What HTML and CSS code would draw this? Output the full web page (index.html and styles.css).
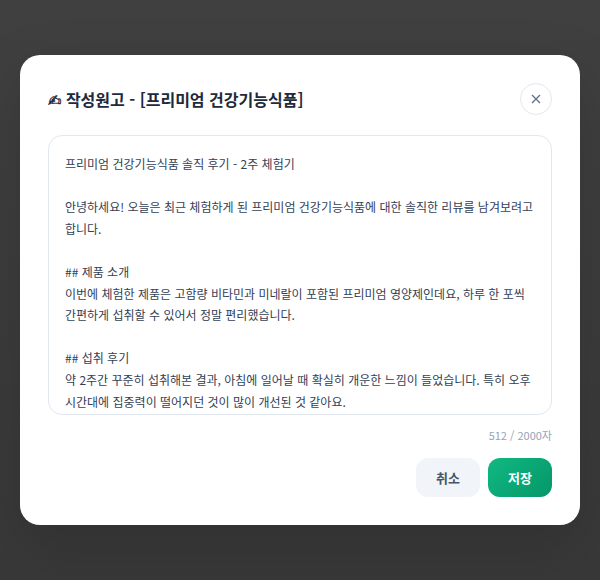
FILE: index.html
```html
<!DOCTYPE html>
<html lang="ko">
<head>
    <meta charset="UTF-8">
    <meta name="viewport" content="width=device-width, initial-scale=1.0">
    <title>작성원고</title>
    <link rel="stylesheet" href="styles.css">
</head>
<body>
    <div class="overlay">
        <div class="modal">
            <div class="modal-header">
                <h2 class="modal-title"><span class="title-icon">✍&#xFE0E;</span> 작성원고 - [프리미엄 건강기능식품]</h2>
                <button class="close-btn" type="button" aria-label="닫기">
                    <svg width="10" height="10" viewBox="0 0 10 10"><path d="M1 1L9 9M9 1L1 9"/></svg>
                </button>
            </div>
            <div class="editor">프리미엄 건강기능식품 솔직 후기 - 2주 체험기

안녕하세요! 오늘은 최근 체험하게 된 프리미엄 건강기능식품에 대한 솔직한 리뷰를 남겨보려고 합니다.

## 제품 소개
이번에 체험한 제품은 고함량 비타민과 미네랄이 포함된 프리미엄 영양제인데요, 하루 한 포씩 간편하게 섭취할 수 있어서 정말 편리했습니다.

## 섭취 후기
약 2주간 꾸준히 섭취해본 결과, 아침에 일어날 때 확실히 개운한 느낌이 들었습니다. 특히 오후 시간대에 집중력이 떨어지던 것이 많이 개선된 것 같아요.</div>
            <div class="counter">512 / 2000자</div>
            <div class="actions">
                <button class="btn btn-cancel" type="button">취소</button>
                <button class="btn btn-save" type="button">저장</button>
            </div>
        </div>
    </div>
</body>
</html>
```

FILE: styles.css
```css
* {
    box-sizing: border-box;
}
body {
    margin: 0;
    font-family: "Noto Sans CJK KR", "Noto Sans", sans-serif;
    background-color: #3c3c3c;
}
.overlay {
    height: 580px;
    display: flex;
    align-items: center;
    justify-content: center;
    overflow: hidden;
    background: linear-gradient(#404040, #383838);
}
.modal {
    width: 560px;
    height: 470px;
    background-color: #fff;
    border-radius: 20px;
    padding: 28px;
    box-shadow: 0 20px 60px rgba(0,0,0,0.15);
}
.modal-header {
    display: flex;
    align-items: center;
    justify-content: space-between;
    margin-bottom: 20px;
}
.modal-title {
    margin: 0;
    font-size: 16px;
    font-weight: 700;
    color: #1e293b;
}
.title-icon {
    font-family: "DejaVu Sans", sans-serif;
    -webkit-text-stroke: 0.4px #1e293b;
}
.close-btn {
    width: 32px;
    height: 32px;
    padding: 0;
    display: flex;
    align-items: center;
    justify-content: center;
    background-color: #fff;
    border: 1px solid #e2e8f0;
    border-radius: 50%;
}
.close-btn path {
    fill: none;
    stroke: #64748b;
    stroke-width: 1.4;
}
.editor {
    height: 280px;
    overflow: hidden;
    padding: 17px 16px 16px;
    border: 1px solid #e2e8f0;
    border-radius: 14px;
    font-size: 12px;
    line-height: 21.6px;
    color: #334155;
    white-space: pre-wrap;
}
.counter {
    margin-top: 12px;
    font-size: 11px;
    line-height: 16px;
    color: #94a3b8;
    text-align: right;
}
.actions {
    display: flex;
    justify-content: flex-end;
    gap: 8px;
    margin-top: 15px;
}
.btn {
    width: 64px;
    height: 39px;
    padding: 0;
    border: none;
    border-radius: 12px;
    font-family: inherit;
    font-size: 13px;
    font-weight: 700;
}
.btn-cancel {
    background-color: #f1f5f9;
    color: #475569;
}
.btn-save {
    background: linear-gradient(135deg, #10b981, #059669);
    color: #fff;
}
```
